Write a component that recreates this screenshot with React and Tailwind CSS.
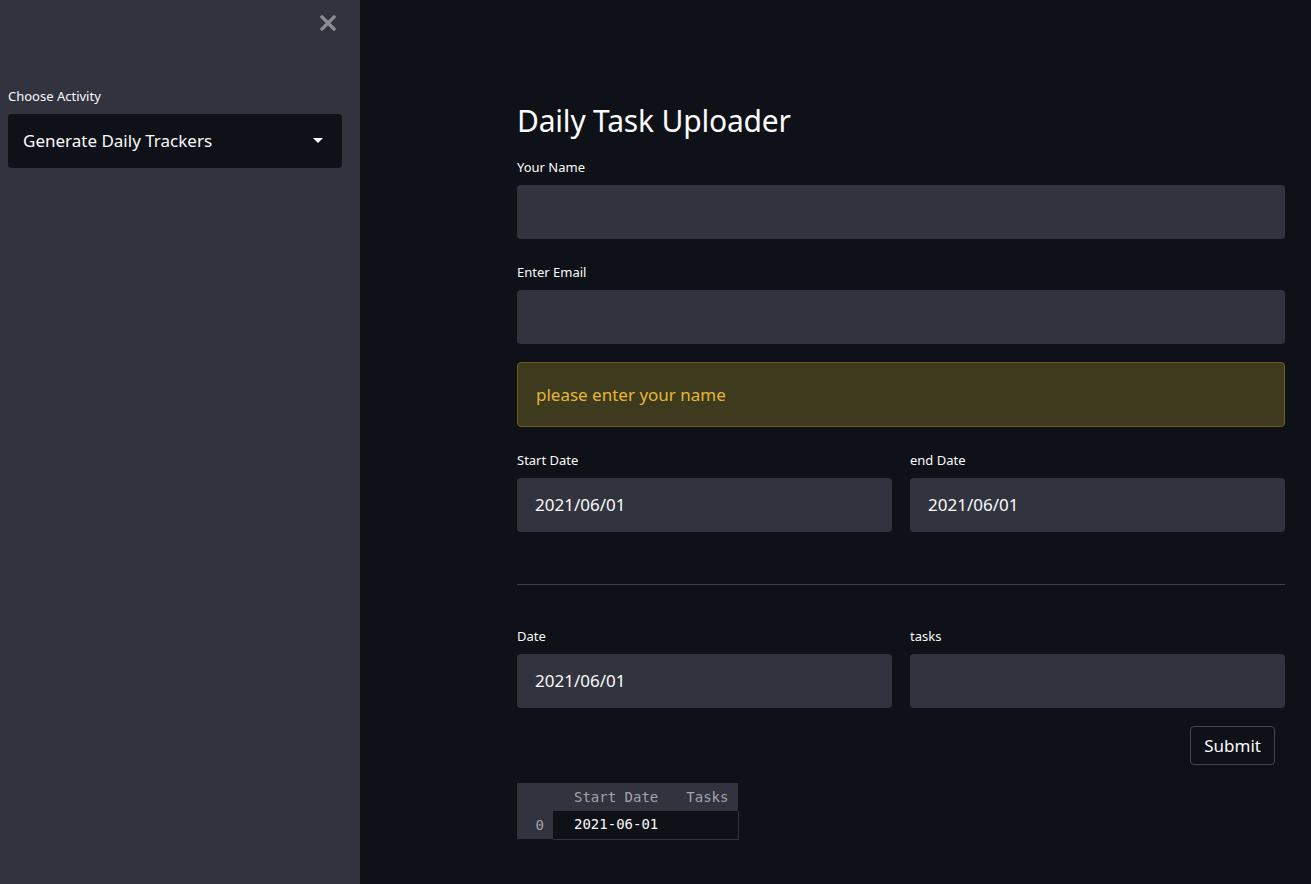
import React from "react";

const sans = { fontFamily: '"Noto Sans", "Open Sans", sans-serif' };
const mono = { fontFamily: '"DejaVu Sans Mono", "Liberation Mono", monospace' };

function Label({ children }) {
  return <div className="text-[13px] leading-[18px] text-[#fafafa] mb-[9px]">{children}</div>;
}

function Field({ value }) {
  return (
    <div className="h-[54px] rounded-[4px] bg-[#31333f] flex items-center px-[18px] text-[17px] text-[#fafafa]">
      {value}
    </div>
  );
}

export default function App() {
  return (
    <div className="flex w-[1311px] h-[884px] bg-[#0e1117] overflow-hidden" style={sans}>
      <aside className="w-[360px] shrink-0 bg-[#31333f] flex flex-col pl-[8px] pr-[18px]">
        <div className="flex justify-end h-[48px] pt-[12px] pr-[3px]">
          <svg width="22" height="22" viewBox="0 0 22 22">
            <path d="M5 5 L17 17 M17 5 L5 17" stroke="#8b8c94" strokeWidth="3.2" strokeLinecap="square" />
          </svg>
        </div>
        <div className="mt-[39px] text-[13px] leading-[18px] text-[#fafafa]">Choose Activity</div>
        <div className="mt-[9px] h-[54px] rounded-[4px] bg-[#0e1117] flex items-center justify-between pl-[15px] pr-[19px] text-[17px] text-[#fafafa]">
          <span>Generate Daily Trackers</span>
          <svg width="10" height="6" viewBox="0 0 10 6">
            <path d="M0 0 L10 0 L5 5 Z" fill="#fafafa" />
          </svg>
        </div>
      </aside>
      <main className="flex-1 pl-[157px]">
        <div className="w-[768px] pt-[100px]">
          <h1 className="text-[30px] leading-[42px] tracking-[-0.2px] text-[#fafafa] font-normal mb-[16px]">Daily Task Uploader</h1>
          <Label>Your Name</Label>
          <Field />
          <div className="h-[24px]" />
          <Label>Enter Email</Label>
          <Field />
          <div className="mt-[18px] h-[65px] rounded-[4px] bg-[#3d3a1e] border border-[#6b5e1c] flex items-center px-[18px] text-[17px] text-[#e4b73a]">
            please enter your name
          </div>
          <div className="grid grid-cols-2 gap-[18px] mt-[24px]">
            <div>
              <Label>Start Date</Label>
              <Field value="2021/06/01" />
            </div>
            <div>
              <Label>end Date</Label>
              <Field value="2021/06/01" />
            </div>
          </div>
          <div className="h-px bg-[#3b3c45] mt-[52px]" />
          <div className="grid grid-cols-2 gap-[18px] mt-[42px]">
            <div>
              <Label>Date</Label>
              <Field value="2021/06/01" />
            </div>
            <div>
              <Label>tasks</Label>
              <Field />
            </div>
          </div>
          <div className="flex justify-end pr-[10px] mt-[18px]">
            <button className="h-[39px] px-[13px] rounded-[4px] border border-[#45464f] bg-[#0e1117] text-[17px] text-[#fafafa]">
              Submit
            </button>
          </div>
          <table className="mt-[18px] border-collapse text-[14px]" style={mono}>
            <thead>
              <tr className="h-[28px] bg-[#31333f] text-[#a3a4aa]">
                <th className="w-[36px] font-normal"></th>
                <th className="font-normal text-right pl-[21px] pr-[14px]">Start Date</th>
                <th className="font-normal text-right pl-[14px] pr-[10px]">Tasks</th>
              </tr>
            </thead>
            <tbody>
              <tr className="h-[28px]">
                <td className="bg-[#31333f] text-[#a3a4aa] text-right pr-[9px]">0</td>
                <td className="bg-[#0e1117] text-[#fafafa] text-right pl-[21px] pr-[14px] border-b border-[#31333f]">2021-06-01</td>
                <td className="bg-[#0e1117] border-b border-r border-[#31333f]"></td>
              </tr>
            </tbody>
          </table>
        </div>
      </main>
    </div>
  );
}
